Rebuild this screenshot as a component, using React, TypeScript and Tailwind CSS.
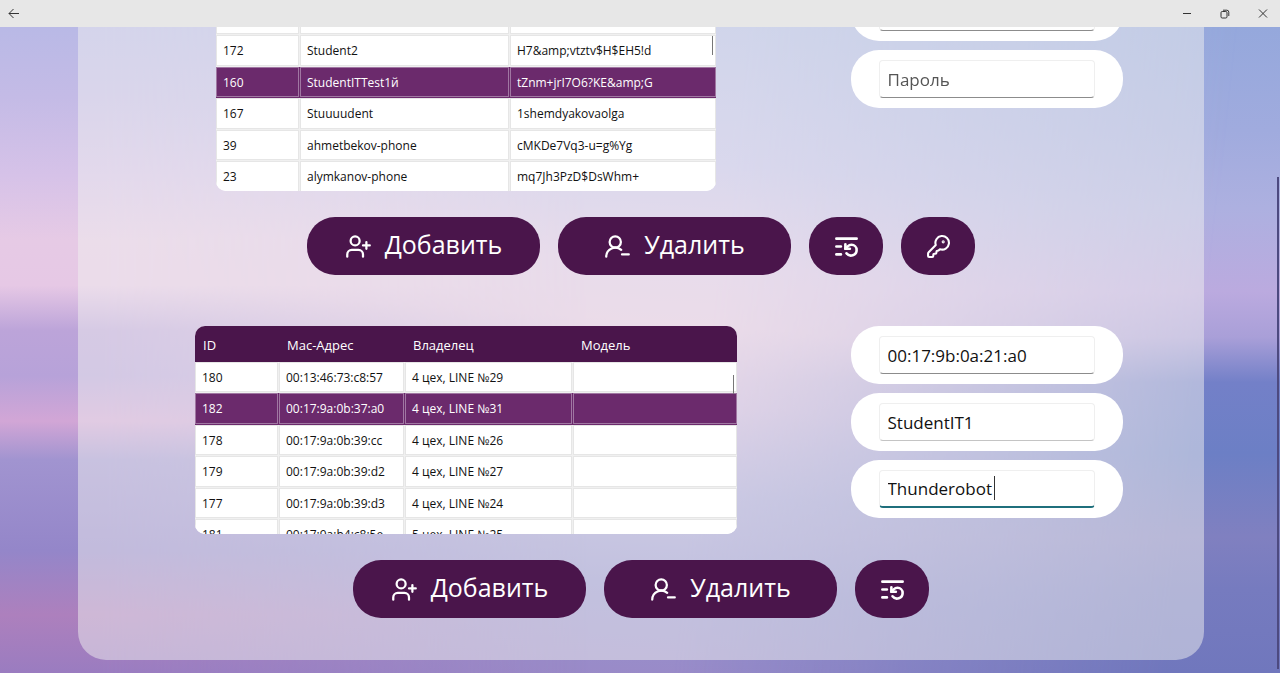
import { useEffect, useRef } from "react";
import type { ReactNode } from "react";
import { KeyRound, ListRestart, UserPlus, UserRoundMinus } from "lucide-react";

type Column = { name: string; title?: string; width: string };

const accountColumns: Column[] = [
  { name: "ID", width: "w-[84px]" },
  { name: "Логин", width: "w-[210px]" },
  { name: "Пароль", width: "w-[206px]" },
];

const accounts: string[][] = [
  ["", "", ""],
  ["172", "Student2", "H7&amp;vtztv$H$EH5!d"],
  ["160", "StudentITTest1й", "tZnm+jrI7O6?KE&amp;G"],
  ["167", "Stuuuudent", "1shemdyakovaolga"],
  ["39", "ahmetbekov-phone", "cMKDe7Vq3-u=g%Yg"],
  ["23", "alymkanov-phone", "mq7Jh3PzD$DsWhm+"],
];

const deviceColumns: Column[] = [
  { name: "ID", title: "ID", width: "w-[84px]" },
  { name: "Мас-Адрес", title: "Мас-Адрес", width: "w-[126px]" },
  { name: "Владелец", title: "Владелец", width: "w-[168px]" },
  { name: "Модель", title: "Модель", width: "w-[164px]" },
];

const devices: string[][] = [
  ["180", "00:13:46:73:c8:57", "4 цех, LINE №29", ""],
  ["182", "00:17:9a:0b:37:a0", "4 цех, LINE №31", ""],
  ["178", "00:17:9a:0b:39:cc", "4 цех, LINE №26", ""],
  ["179", "00:17:9a:0b:39:d2", "4 цех, LINE №27", ""],
  ["177", "00:17:9a:0b:39:d3", "4 цех, LINE №24", ""],
  ["181", "00:17:9a:b4:c8:5e", "5 цех, LINE №25", ""],
];

function TitleBar() {
  return (
    <header className="flex h-[27px] shrink-0 items-center justify-between bg-[#e7e7e7] px-1 text-[#333]">
      <button aria-label="Назад" className="flex size-5 items-center justify-center">
        <svg width="12" height="12" viewBox="0 0 12 12" fill="none" stroke="currentColor">
          <path d="M11 5.500H1M5.500 1L1 5.500 5.500 10" />
        </svg>
      </button>
      <div className="flex gap-[18px] pr-[3px]">
        <button aria-label="Свернуть" className="flex size-5 items-center justify-center">
          <svg width="10" height="10" viewBox="0 0 10 10" fill="none" stroke="currentColor">
            <path d="M1 4.500h8" />
          </svg>
        </button>
        <button aria-label="Восстановить" className="flex size-5 items-center justify-center">
          <svg width="10" height="10" viewBox="0 0 10 10" fill="none" stroke="currentColor">
            <rect x="1" y="2.500" width="6" height="6.500" rx="1.200" />
            <path d="M3 1.200h3.800a2 2 0 0 1 2 2V7" />
          </svg>
        </button>
        <button aria-label="Закрыть" className="flex size-5 items-center justify-center">
          <svg width="10" height="10" viewBox="0 0 10 10" fill="none" stroke="currentColor">
            <path d="M1 0.500l8 8M9 0.500l-8 8" />
          </svg>
        </button>
      </div>
    </header>
  );
}

function Backdrop() {
  return (
    <>
      <div className="absolute inset-0 bg-[linear-gradient(180deg,#95a8dc_0%,#a0abde_16%,#adb0e0_28%,#bbaadf_41%,#a99fd8_48%,#7380c8_55%,#6c7fc5_66%,#8080c0_79%,#767bbf_87%,#7077bd_100%)]" />
      <div className="absolute inset-0 bg-[linear-gradient(184deg,#acb9e4_0%,#c3c0ea_24%,#e0c8e7_38%,#e6c8e3_46%,#d2b8df_57%,#a9a4d8_69%,#9492ce_82%,#9c87c5_100%)] [mask-image:linear-gradient(96deg,#000_55%,transparent_92%)]" />
      <div className="absolute inset-0 bg-[linear-gradient(180deg,#b9b9e6_0%,#c4bbe6_11%,#d6c2e8_23%,#e6cae5_33%,#e6c8e5_40%,#bca4d9_47%,#b7a2d9_54%,#d2a6d6_61%,#a194d0_67%,#9486c9_81%,#ad80bd_91%,#9a7cc0_100%)] [mask-image:linear-gradient(90deg,#000_8%,transparent_46%)]" />
    </>
  );
}

function DataTable({
  label,
  columns,
  rows,
  selectedId,
  scrollTop,
  thumb,
}: {
  label: string;
  columns: Column[];
  rows: string[][];
  selectedId: string;
  scrollTop: number;
  thumb: string;
}) {
  const view = useRef<HTMLDivElement>(null);
  useEffect(() => {
    if (view.current) view.current.scrollTop = scrollTop;
  }, [scrollTop]);

  return (
    <div className="relative justify-self-center overflow-hidden rounded-[10px] bg-white">
      <div ref={view} className="h-[208px] overflow-y-auto [scrollbar-width:none]">
        <table aria-label={label} className="table-fixed border-separate border-spacing-0 text-left">
          <thead className="sticky top-0">
            <tr className="h-9 bg-[#4a154b] text-[13px] text-white">
              {columns.map((c) => (
                <th key={c.name} scope="col" aria-label={c.name} className={`${c.width} px-2 pt-[3px] pb-0 font-normal`}>
                  {c.title}
                </th>
              ))}
            </tr>
          </thead>
          <tbody className="text-[12px]">
            {rows.map((row, i) => {
              const tone =
                row[0] === selectedId
                  ? "border-[#6b2a6c] bg-[#6b2a6c] text-white shadow-[inset_0_0_0_1px_#a077a2]"
                  : "border-[#f0f0f0] bg-white text-[#111] shadow-[inset_0_0_0_1px_#e6e6e6]";
              return (
                <tr key={i} className="odd:h-[31px] even:h-8">
                  {row.map((cell, j) => (
                    <td
                      key={j}
                      className={`border-r border-b px-[7px] pt-px pb-0 whitespace-nowrap last:border-r-0 ${tone}`}
                    >
                      {cell}
                    </td>
                  ))}
                </tr>
              );
            })}
          </tbody>
        </table>
      </div>
      <span className={`absolute right-[3px] h-[19px] w-px bg-[#777] ${thumb}`} />
    </div>
  );
}

function Field({
  label,
  value,
  line = "border-b-[#8c8c8c]",
  children,
}: {
  label: string;
  value?: string;
  line?: string;
  children?: ReactNode;
}) {
  return (
    <div className="rounded-[28px] bg-white px-7 py-[10px]">
      <div className="relative">
        <input
          aria-label={label}
          placeholder={label}
          defaultValue={value}
          className={`block h-[38px] w-[216px] rounded-[4px] border border-[#efefef] px-2 text-[17px] text-[#111] outline-none placeholder:text-[#555] ${line}`}
        />
        {children}
      </div>
    </div>
  );
}

function ActionButton({ icon, children }: { icon: ReactNode; children: ReactNode }) {
  return (
    <button className="flex h-[58px] w-[233px] items-center justify-center gap-[13px] rounded-[28px] bg-[#4a154b] text-[25px] text-white">
      {icon}
      <span className="pb-[3px]">{children}</span>
    </button>
  );
}

function IconButton({ label, children }: { label: string; children: ReactNode }) {
  return (
    <button
      aria-label={label}
      className="flex h-[58px] w-[74px] items-center justify-center rounded-[28px] bg-[#4a154b] text-white"
    >
      {children}
    </button>
  );
}

function Section({ table, fields, actions }: { table: ReactNode; fields: ReactNode; actions: ReactNode }) {
  return (
    <section className="flex flex-col gap-[26px]">
      <div className="grid grid-cols-[2fr_1fr] items-start pr-11 pl-[41px]">
        {table}
        <div className="flex flex-col gap-[9px] justify-self-center">{fields}</div>
      </div>
      <div className="flex justify-center gap-[18px]">{actions}</div>
    </section>
  );
}

function CommonActions() {
  return (
    <>
      <ActionButton icon={<UserPlus size={27} />}>Добавить</ActionButton>
      <ActionButton icon={<UserRoundMinus size={27} />}>Удалить</ActionButton>
      <IconButton label="Обновить список">
        <ListRestart size={27} strokeWidth={2.3} />
      </IconButton>
    </>
  );
}

export default function App() {
  return (
    <div className="flex h-screen flex-col overflow-hidden font-['Open_Sans','Noto_Sans',sans-serif]">
      <TitleBar />
      <main className="relative isolate flex min-h-0 flex-1 flex-col justify-end overflow-hidden">
        <Backdrop />
        <div className="relative mr-[76px] mb-[13px] ml-[78px] flex flex-col gap-[51px] rounded-[28px] bg-[#f0f0f0]/50 pt-16 pb-[42px]">
          <Section
            table={
              <DataTable
                label="Учётные записи"
                columns={accountColumns}
                rows={accounts}
                selectedId="160"
                scrollTop={15}
                thumb="top-[53px]"
              />
            }
            fields={
              <>
                <Field label="Логин" />
                <Field label="Пароль" />
              </>
            }
            actions={
              <>
                <CommonActions />
                <IconButton label="Сменить пароль">
                  <KeyRound size={25} />
                </IconButton>
              </>
            }
          />
          <Section
            table={
              <DataTable
                label="Устройства"
                columns={deviceColumns}
                rows={devices}
                selectedId="182"
                scrollTop={0}
                thumb="top-[49px]"
              />
            }
            fields={
              <>
                <Field label="Мас-Адрес" value="00:17:9b:0a:21:a0" />
                <Field label="Владелец" value="StudentIT1" line="border-b-[#c4c4c4]" />
                <Field label="Модель" value="Thunderobot" line="border-b-2 border-b-[#1f6f7c]">
                  <span className="absolute top-[6px] left-[115px] h-6 w-px bg-[#333]" />
                </Field>
              </>
            }
            actions={<CommonActions />}
          />
        </div>
        <span className="absolute top-[150px] right-px bottom-1 w-[2px] bg-[#4d4a80]" />
      </main>
    </div>
  );
}
